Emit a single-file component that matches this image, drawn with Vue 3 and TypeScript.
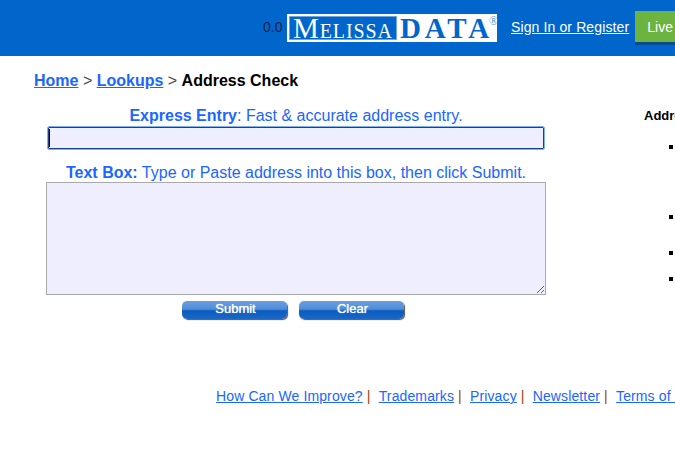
<script setup lang="ts">
const footerLinks: string[] = ['How Can We Improve?', 'Trademarks', 'Privacy', 'Newsletter', 'Terms of Use']
const bullets: number[] = [66, 32, 22, 0]
</script>

<template>
  <div class="page">
    <header class="header">
      <span class="version">0.0</span>
      <div class="logo">
        <div class="logo-left"><span class="cap">M</span>ELISSA</div>
        <div class="logo-right">DATA<span class="reg">®</span></div>
      </div>
      <a class="sign" href="#">Sign In or Register</a>
      <a class="live" href="#">Live Chat</a>
    </header>

    <nav class="crumbs">
      <a href="#">Home</a><span class="sep"> &gt; </span><a href="#">Lookups</a><span class="sep"> &gt; </span><b>Address Check</b>
    </nav>

    <main class="content">
      <section class="form">
        <p class="label"><b>Express Entry</b>: Fast &amp; accurate address entry.</p>
        <div class="entry"><span class="caret"></span></div>
        <p class="label second"><b>Text Box:</b> Type or Paste address into this box, then click Submit.</p>
        <textarea class="box"></textarea>
        <div class="buttons">
          <button class="btn" type="button">Submit</button>
          <button class="btn" type="button">Clear</button>
        </div>
      </section>
      <aside class="side">
        <h4>Address Check</h4>
        <ul>
          <li v-for="(gap, i) in bullets" :key="i" :style="{ marginBottom: gap + 'px' }"></li>
        </ul>
      </aside>
    </main>

    <footer class="footer">
      <template v-for="(l, i) in footerLinks" :key="l">
        <a href="#">{{ l }}</a><span v-if="i < footerLinks.length - 1" class="pipe">|</span>
      </template>
    </footer>
  </div>
</template>

<style>
html, body { margin: 0; overflow: hidden; background: #fff; }
</style>

<style scoped>
.page {
  width: 675px;
  height: 472px;
  overflow: hidden;
  font-family: "Liberation Sans", Arial, sans-serif;
  color: #000;
}
.header {
  height: 56px;
  background: #0066cc;
  display: flex;
  align-items: flex-start;
  padding-left: 263px;
  box-sizing: border-box;
  width: 800px;
}
.version {
  font-size: 14px;
  line-height: 16px;
  margin-top: 19px;
  width: 24px;
  color: #0a1f4a;
}
.logo {
  width: 210px;
  height: 28px;
  margin-top: 14px;
  background: #fff;
  display: flex;
  padding: 2px 0 2px 2px;
  box-sizing: border-box;
  font-family: "Liberation Serif", "Times New Roman", serif;
}
.logo-left {
  width: 108px;
  height: 24px;
  background: #0066cc;
  color: #fff;
  border: 1px solid #6ea6e0;
  box-sizing: border-box;
  font-size: 20px;
  line-height: 27px;
  letter-spacing: 0.9px;
  padding-left: 3px;
  white-space: nowrap;
  overflow: hidden;
}
.cap { font-size: 29px; line-height: 22px; }
.logo-right {
  position: relative;
  flex: 1;
  color: #0066cc;
  font-weight: bold;
  font-size: 29px;
  line-height: 25px;
  letter-spacing: 3.8px;
  padding-left: 3px;
  white-space: nowrap;
}
.reg {
  position: absolute;
  top: -1px;
  right: -1px;
  font-size: 12px;
  line-height: 12px;
  letter-spacing: 0;
  font-weight: normal;
  color: #4f92d6;
}
.sign {
  color: #fff;
  font-size: 14px;
  line-height: 16px;
  letter-spacing: 0.12px;
  margin-top: 19px;
  margin-left: 14px;
  white-space: nowrap;
}
.live {
  margin-left: 6px;
  margin-top: 11px;
  height: 31px;
  padding: 0 12px;
  background: #6cb33f;
  color: #fff;
  font-size: 14px;
  line-height: 33px;
  text-decoration: none;
  white-space: nowrap;
  box-shadow: 0 3px 0 #0a4a94;
}
.crumbs {
  margin: 16px 0 0 34px;
  font-size: 16px;
  line-height: 18px;
  height: 18px;
  white-space: nowrap;
}
.crumbs a { color: #1a66ff; font-weight: bold; }
.crumbs .sep { color: #444; }
.content {
  display: flex;
  width: 900px;
  margin-top: 17px;
}
.form {
  width: 500px;
  margin-left: 46px;
  flex: none;
}
.label {
  margin: 0;
  text-align: center;
  font-size: 16px;
  line-height: 18px;
  color: #1a66ff;
  white-space: nowrap;
}
.second { margin-top: 15px; }
.entry {
  margin: 2px 2px 0;
  height: 22px;
  box-sizing: border-box;
  background: #eeeeff;
  border: 1px solid #1d3f8f;
  border-radius: 1px;
  outline: 1px solid #7fb0f0;
  display: flex;
  align-items: center;
}
.caret { width: 1px; height: 18px; background: #000; }
.box {
  display: block;
  width: 500px;
  height: 113px;
  box-sizing: border-box;
  margin: 0;
  background: #eeeeff;
  border: 1px solid #a9a9a9;
  padding: 2px;
  outline: none;
}
.buttons {
  display: flex;
  gap: 12px;
  margin: 6px 0 0 136px;
}
.btn {
  width: 105px;
  height: 18px;
  padding: 0 0 2px 2px;
  border: none;
  border-radius: 5px;
  color: #fff;
  font-family: inherit;
  font-size: 13px;
  font-weight: normal;
  line-height: 14px;
  text-shadow: 0 0 1px #fff;
  background: linear-gradient(#6a9fe0 0, #4f8dd8 45%, #0a5cc0 55%, #1a68c8 100%);
  box-shadow: 1px 1px 1px #555;
}
.side {
  margin-left: 98px;
  flex: none;
  margin-top: 1px;
}
.side h4 {
  margin: 0;
  font-size: 13px;
  line-height: 16px;
  white-space: nowrap;
}
.side ul {
  list-style: none;
  margin: 21px 0 0 25px;
  padding: 0;
}
.side li {
  width: 4px;
  height: 4px;
  background: #000;
}
.footer {
  margin-top: 69px;
  margin-left: 216px;
  width: 700px;
  font-size: 14px;
  line-height: 16px;
  letter-spacing: 0.12px;
  white-space: nowrap;
}
.footer a { color: #1a66ff; }
.pipe { color: #a04000; margin: 0 8.2px 0 4px; }
</style>
